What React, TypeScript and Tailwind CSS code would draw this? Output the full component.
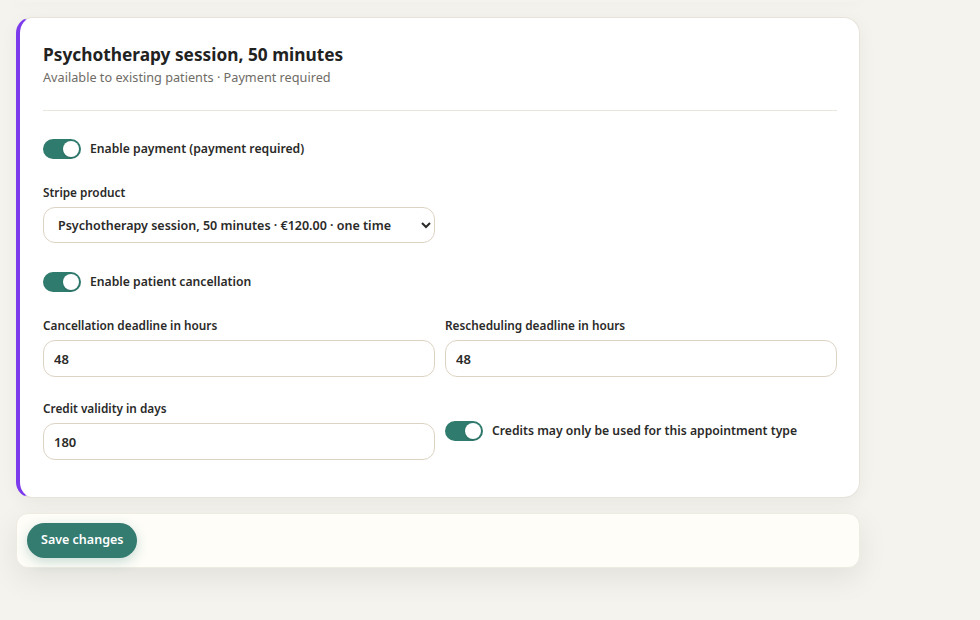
import { useState } from "react"

type ToggleProps = {
  checked: boolean
  onChange: (v: boolean) => void
  label: string
}

function Toggle({ checked, onChange, label }: ToggleProps) {
  return (
    <label className="flex cursor-pointer items-center gap-[9px]">
      <button
        type="button"
        role="switch"
        aria-checked={checked}
        onClick={() => onChange(!checked)}
        className={`relative flex h-[20px] w-[38px] shrink-0 items-center rounded-full px-[2px] ${
          checked ? "justify-end bg-[#2f7b6e]" : "justify-start bg-[#d8d3c8]"
        }`}
      >
        <span className="h-[16px] w-[16px] rounded-full bg-white shadow-sm" />
      </button>
      <span className="text-[12.2px] leading-[20px] font-semibold text-[#2a2a28]">{label}</span>
    </label>
  )
}

function Field({
  label,
  value,
  onChange,
}: {
  label: string
  value: string
  onChange: (v: string) => void
}) {
  return (
    <div className="flex flex-col gap-[6px]">
      <span className="text-[11.8px] leading-[17px] font-semibold text-[#2a2a28]">{label}</span>
      <input
        value={value}
        onChange={(e) => onChange(e.target.value)}
        className="h-[37px] w-full rounded-[12px] border border-[#ddd3c4] bg-white px-[10px] text-[13px] font-semibold text-[#2a2a28] outline-none"
      />
    </div>
  )
}

export default function App() {
  const [payment, setPayment] = useState(true)
  const [cancellation, setCancellation] = useState(true)
  const [creditsOnly, setCreditsOnly] = useState(true)
  const [cancelHours, setCancelHours] = useState("48")
  const [rescheduleHours, setRescheduleHours] = useState("48")
  const [validity, setValidity] = useState("180")

  return (
    <div
      className="min-h-[620px] bg-[#f4f3ee] pl-[16px] pr-[120px]"
      style={{ fontFamily: '"Noto Sans", "Open Sans", sans-serif' }}
    >
      <div className="h-[2px] w-[844px] shadow-[0_2px_10px_rgba(0,0,0,0.06)]" />
      <div className="flex w-[844px] flex-col gap-[15px] pt-[15px]">
        <section className="rounded-[16px] border border-[#e7e3da] border-l-[4px] border-l-[#7c3aed] bg-white pb-[37px] pl-[23px] pr-[22px] pt-[26px] shadow-[0_4px_18px_rgba(0,0,0,0.05)]">
          <h2 className="text-[17.3px] font-bold leading-[22px] text-[#22221f]">
            Psychotherapy session, 50 minutes
          </h2>
          <p className="mt-[2px] text-[12.7px] leading-[18px] text-[#6f6c66]">
            Available to existing patients · Payment required
          </p>
          <div className="mt-[24px] h-px bg-[#e9e6df]" />

          <div className="mt-[28px]">
            <Toggle checked={payment} onChange={setPayment} label="Enable payment (payment required)" />
          </div>

          <div className="mt-[25px] flex w-[392px] flex-col gap-[6px]">
            <span className="text-[11.8px] leading-[17px] font-semibold text-[#2a2a28]">Stripe product</span>
            <select className="h-[36px] w-full rounded-[12px] border border-[#ddd3c4] bg-white px-[10px] text-[12.5px] font-semibold text-[#2a2a28] outline-none">
              <option>Psychotherapy session, 50 minutes · €120.00 · one time</option>
            </select>
          </div>

          <div className="mt-[29px]">
            <Toggle checked={cancellation} onChange={setCancellation} label="Enable patient cancellation" />
          </div>

          <div className="mt-[25px] grid grid-cols-2 gap-x-[10px] gap-y-[23px]">
            <Field label="Cancellation deadline in hours" value={cancelHours} onChange={setCancelHours} />
            <Field label="Rescheduling deadline in hours" value={rescheduleHours} onChange={setRescheduleHours} />
            <Field label="Credit validity in days" value={validity} onChange={setValidity} />
            <div className="flex items-start pt-[21px]">
              <Toggle
                checked={creditsOnly}
                onChange={setCreditsOnly}
                label="Credits may only be used for this appointment type"
              />
            </div>
          </div>
        </section>

        <div className="flex rounded-[12px] border border-[#eeebe2] bg-[#fefdf8] px-[10px] py-[9px] shadow-[0_10px_30px_rgba(0,0,0,0.08)]">
          <button className="h-[35px] rounded-full bg-[#347b70] px-[14px] text-[12.5px] font-semibold text-white shadow-[0_4px_12px_rgba(47,123,110,0.25)]">
            Save changes
          </button>
        </div>
      </div>
    </div>
  )
}
